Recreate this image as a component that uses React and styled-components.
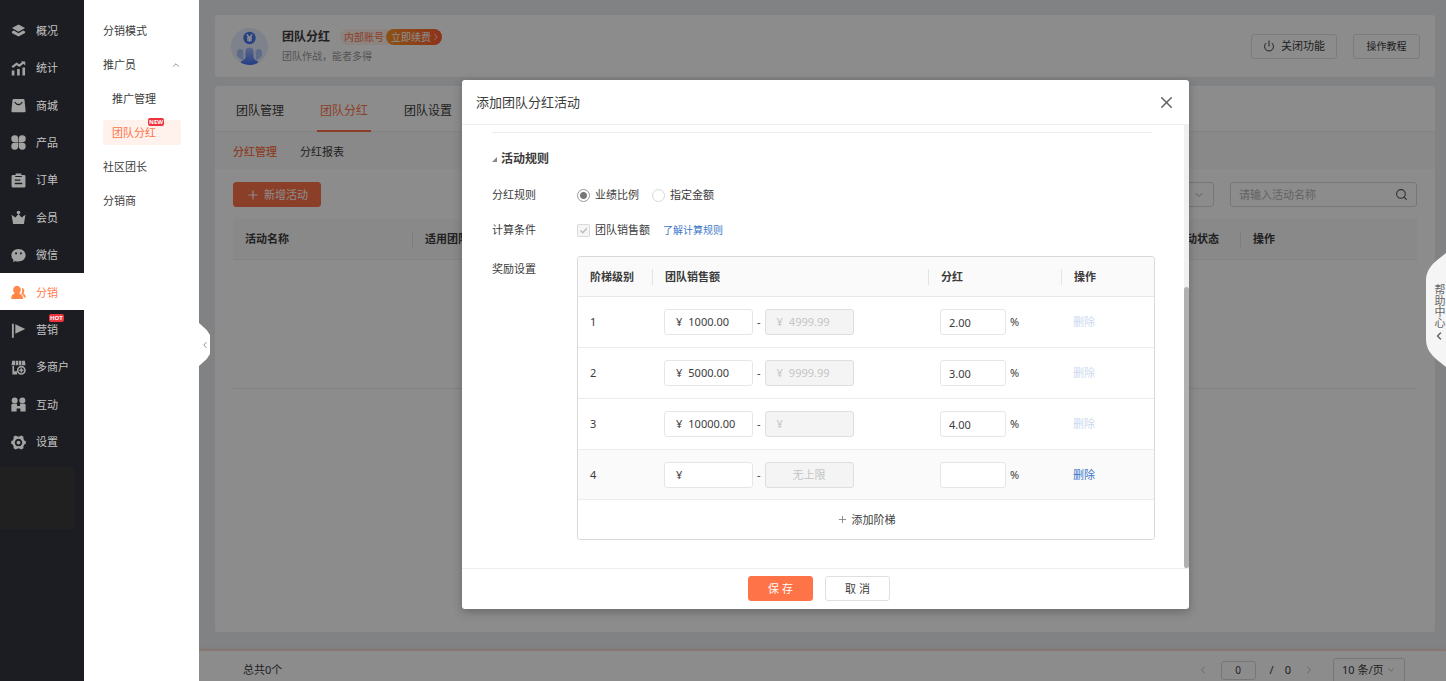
import React, { useState } from 'react';
import styled, { createGlobalStyle, css } from 'styled-components';
import { ChevronDown, ChevronLeft, ChevronRight, ChevronUp, Plus, Power, Search, X } from 'lucide-react';

const GlobalStyle = createGlobalStyle`
    * {
        box-sizing: border-box;
    }
    body {
        margin: 0;
        overflow: hidden;
    }
    body, button, input, select {
        font-family: "Noto Sans", "Noto Sans CJK SC", sans-serif;
        font-size: 11px;
        line-height: 16px;
        color: #3c3c3c;
    }
    button {
        cursor: pointer;
    }
    a {
        text-decoration: none;
    }
`;

const menus = [
    { icon: 'layers', name: '概况' },
    { icon: 'chart', name: '统计' },
    { icon: 'bag', name: '商城' },
    { icon: 'clover', name: '产品' },
    { icon: 'order', name: '订单' },
    { icon: 'crown', name: '会员' },
    { icon: 'wechat', name: '微信' },
    { icon: 'people', name: '分销', active: true },
    { icon: 'flag', name: '营销', tag: 'HOT' },
    { icon: 'shop', name: '多商户' },
    { icon: 'interact', name: '互动' },
    { icon: 'gear', name: '设置' },
];

const subMenus = [
    { name: '分销模式' },
    { name: '推广员', open: true },
    { name: '推广管理', child: true },
    { name: '团队分红', child: true, active: true, tag: 'NEW' },
    { name: '社区团长' },
    { name: '分销商' },
];

const initialLevels = [
    { min: '1000.00', max: '4999.99', rate: '2.00' },
    { min: '5000.00', max: '9999.99', rate: '3.00' },
    { min: '10000.00', max: '', rate: '4.00' },
    { min: '', max: null, rate: '' },
];

const icons = {
    layers: (
        <>
            <path d="M8 1.5 15 5.4 8 9.3 1 5.4Z" />
            <path d="M1 9.1 3 8l5 2.8L13 8l2 1.1v1.5L8 14.5 1 10.6Z" />
        </>
    ),
    chart: (
        <>
            <path d="M.8 10h2.800v5.500H.8zM6.500 8.500h2.800v7H6.500zM12.200 7h2.800v8.500h-2.800z" />
            <path d="M1.300 6.600 6 3l3 2L13.600 1.300" fill="none" stroke="currentColor" strokeWidth="2.400" />
            <path d="M10.500.4h4.700v4.500z" />
        </>
    ),
    bag: (
        <path fillRule="evenodd" d="M2.800 1h10.400q1 0 1.200 1L15.600 13.500q0 1.600-1.400 1.600H1.800Q.4 15.100.4 13.500L1.600 2Q1.800 1 2.800 1ZM4.300 4Q8 9 11.700 4L12.600 4.900Q8 10.600 3.400 4.900Z" />
    ),
    clover: (
        <path d="M7.700 7.700H4.300A3.700 3.700 0 1 1 7.700 4ZM8.300 7.700V4A3.700 3.700 0 1 1 11.700 7.700ZM7.700 8.300V12A3.700 3.700 0 1 1 4.300 8.300ZM8.300 8.300H11.700A3.700 3.700 0 1 1 8.300 12Z" />
    ),
    order: (
        <path fillRule="evenodd" d="M5 .5h6v1.700h3q1.400 0 1.400 1.200v10.600q0 1.400-1.400 1.400H2Q.6 15.400.6 14V3.400Q.6 2.200 2 2.200h3ZM4.500 3.200v1h7v-1ZM4 6.800v1.500h6V6.800ZM4 10.500V12h8v-1.500Z" />
    ),
    crown: (
        <>
            <circle cx="8" cy="2.600" r="1.900" />
            <path d="M.6 5 4.600 8 8 4.200 11.400 8 15.400 5 13.800 15H2.200Z" />
        </>
    ),
    wechat: (
        <path fillRule="evenodd" d="M8 1C12.200 1 15.600 4 15.600 7.700S12.500 13.800 9.500 14.200Q6.500 14.600 4.500 13.800L2.300 15.200 2.600 12.700Q.4 10.800.4 7.700C.4 4 3.800 1 8 1ZM5.400 4.600a1.100 1.100 0 1 0 .01 0ZM10.600 4.600a1.100 1.100 0 1 0 .01 0Z" />
    ),
    people: (
        <>
            <path d="M6.300.8a4.200 4.200 0 0 1 2.700 7.400Q9.100 9.300 10.400 9.800 12.800 10.800 12.800 15H.3Q.2 10.800 2.400 9.900 3.800 9.300 3.700 8.200A4.200 4.200 0 0 1 6.300.8Z" />
            <path d="M11.500 2.800a3.400 3.400 0 0 1 2.700 3.200q.1 1.700-1.100 2.800 2.600 1.300 2.800 4.400h-2q-.6-2.900-2.900-4 1.800-3 .5-6.400Z" />
        </>
    ),
    flag: (
        <path d="M1 .8h2v14.800H1zM4.600 1.300 15.200 6.400 4.600 11.500Z" />
    ),
    shop: (
        <>
            <path d="M1.300.8h3v4.800H.5ZM5 .8h2.700v4.800H5ZM8.400.8h2.700v4.800H8.400ZM11.800.8h3l.7 4.800h-3.700ZM1.500 6.300H3.300V12H1.500ZM1.500 12H6.500v3.500H1.500Z" />
            <circle cx="11" cy="11" r="3.900" fill="none" stroke="currentColor" strokeWidth="1.800" />
            <path d="M10.200 8.800h1.600v1.400h1.400v1.600h-1.400v1.400h-1.600v-1.400H8.800v-1.600h1.400Z" />
        </>
    ),
    interact: (
        <>
            <circle cx="3.900" cy="3.600" r="3.200" />
            <circle cx="12.100" cy="3.600" r="3.200" />
            <path d="M.4 8.500Q.4 7.300 1.800 7.300h4.600v2.200h3.200V7.300h4.600q1.400 0 1.400 1.200v7H10v-3.200H6v3.200H.4Z" />
        </>
    ),
    gear: (
        <>
            <path fillRule="evenodd" d="M5 .6 7 1.700h2L11 .6l2.300 1.300-.1 2.200 1 1.700 1.600.9v2.600l-1.600.9-1 1.700.1 2.200L11 15.400 9 14.300H7L5 15.400l-2.300-1.300.1-2.200-1-1.700L.2 9.300V6.700l1.600-.9 1-1.700-.1-2.200ZM8 4a4 4 0 1 0 .01 0Z" />
            <circle cx="8" cy="8" r="2" />
        </>
    ),
};

const MenuIcon = ({ name }) => (
    <svg width="15" height="15" viewBox="0 0 16 16" fill="currentColor" aria-hidden="true">
        {icons[name]}
    </svg>
);

const Layout = styled.div`
    display: grid;
    grid-template-columns: 84px 115px minmax(0, 1fr);
    height: 100vh;
    overflow: hidden;
`;
const Sidebar = styled.nav`
    background-color: #1c1d22;
    padding-top: 11px;
`;
const MenuList = styled.div`
    display: grid;
    grid-auto-rows: 1fr;
    height: 449px;
`;
const MenuLink = styled.a`
    position: relative;
    display: flex;
    align-items: center;
    gap: 10px;
    padding-top: 2px;
    padding-left: 11px;
    color: ${({ $active }) => ($active ? '#ff7a4d' : '#c4c4c4')};
    background-color: ${({ $active }) => ($active ? '#fff' : 'transparent')};

    svg {
        color: ${({ $active }) => ($active ? '#ff8748' : '#a3a3a3')};
    }
`;
const Tag = styled.span`
    position: absolute;
    top: ${({ $top }) => $top}px;
    left: ${({ $left }) => $left}px;
    padding: 0 1px;
    border-radius: 2px;
    background-color: #f0323c;
    color: #fff;
    font-size: 6px;
    font-weight: 700;
    line-height: 8px;
`;
const SidebarBlock = styled.div`
    width: 74px;
    height: 62px;
    margin-top: 7px;
    background-color: #202020;
`;
const SubSidebar = styled.nav`
    position: relative;
    z-index: 3;
    background-color: #fff;
    padding: 13px 18px 0 19px;
`;
const SubLink = styled.a`
    position: relative;
    display: flex;
    align-items: center;
    justify-content: space-between;
    height: 25px;
    margin: 5px 0 9px;
    padding-left: ${({ $child }) => ($child ? 9 : 0)}px;
    border-radius: 3px;
    color: ${({ $active }) => ($active ? '#ff7349' : '#3c3c3c')};
    background-color: ${({ $active }) => ($active ? '#fff1ec' : 'transparent')};
`;
const CollapseButton = styled.button`
    position: absolute;
    top: 323px;
    left: 100%;
    display: flex;
    align-items: center;
    justify-content: center;
    width: 11px;
    height: 43px;
    padding: 0;
    border: 0;
    background-color: #fff;
    color: #777;
    clip-path: polygon(0 0, 70% 16%, 100% 28%, 100% 72%, 70% 84%, 0 100%);
`;
const Main = styled.main`
    position: relative;
    display: flex;
    flex-direction: column;
    min-width: 0;
    height: 100vh;
    background-color: #e9edf1;
`;
const Content = styled.div`
    flex: 1;
    display: flex;
    flex-direction: column;
    gap: 9px;
    min-height: 0;
    padding: 15px 11px 18px 16px;
`;
const Card = styled.section`
    background-color: #fff;
    border-radius: 3px;
`;
const AppHeader = styled(Card)`
    display: flex;
    align-items: center;
    height: 62px;
    padding: 0 15px 0 16px;
`;
const AppTitle = styled.div`
    flex: 1;
    display: flex;
    flex-direction: column;
    gap: 3px;
    padding-top: 1px;
    padding-left: 14px;
`;
const TitleLine = styled.div`
    display: flex;
    align-items: center;
    gap: 10px;

    h1 {
        margin: 0;
        font-size: 12px;
        font-weight: 700;
    }
`;
const AccountBadge = styled.div`
    display: flex;
    align-items: center;
    height: 16px;
    border-radius: 8px;
    background-color: #fff1ec;
    color: #ff7349;
    font-size: 10px;
    padding-left: 4px;
    gap: 2px;
`;
const RenewButton = styled.button`
    display: flex;
    align-items: center;
    height: 16px;
    padding: 0 1px 0 5px;
    border: 0;
    border-radius: 8px;
    background: linear-gradient(90deg, #ff9426, #ff5c33);
    color: #fff;
    font-size: 10px;
`;
const SubTitle = styled.p`
    margin: 0;
    font-size: 10px;
    color: #999;
`;
const HeaderButtons = styled.div`
    display: flex;
    align-items: center;
    gap: 16px;
`;
const Button = styled.button`
    display: flex;
    align-items: center;
    justify-content: center;
    gap: 6px;
    height: 25px;
    padding: 0 11px;
    border: 1px solid #e0e0e0;
    border-radius: 3px;
    background-color: #fff;

    ${({ $primary }) => $primary && css`
        border-color: #ff7349;
        background-color: #ff7349;
        color: #fff;
    `}
`;
const FooterButton = styled(Button)`
    width: 65px;
    padding: 0;
`;
const GuideButton = styled(Button)`
    width: 67px;
    font-size: 10px;
`;
const MainCard = styled(Card)`
    flex: 1;
    min-height: 0;
`;
const Tabs = styled.div`
    display: flex;
    gap: 30px;
    height: 46px;
    padding-left: 18px;
    border-bottom: 1px solid #eee;
`;
const Tab = styled.button`
    height: 46px;
    padding: 5px 3px 0;
    border: 0;
    border-bottom: 2px solid ${({ $active }) => ($active ? '#ff7349' : 'transparent')};
    background: none;
    font-size: 12px;
    color: ${({ $active }) => ($active ? '#ff7349' : '#3c3c3c')};
`;
const SubTabs = styled.div`
    display: flex;
    align-items: center;
    gap: 23px;
    height: 37px;
    padding-left: 18px;
    background-color: #f9f9f9;
`;
const SubTab = styled.button`
    padding: 2px 0 0;
    border: 0;
    background: none;
    color: ${({ $active }) => ($active ? '#ff7349' : '#3c3c3c')};
    font-weight: ${({ $active }) => ($active ? 500 : 400)};
`;
const Toolbar = styled.div`
    display: flex;
    align-items: center;
    gap: 16px;
    padding: 13px 18px 12px;
`;
const AddButton = styled(Button)`
    width: 88px;
    margin-right: auto;
    padding: 0;
    gap: 4px;
`;
const SelectBox = styled.div`
    display: flex;
    align-items: center;
    width: ${({ $width }) => $width}px;
    height: 25px;
    padding: 0 8px;
    border: 1px solid #d9d9d9;
    border-radius: 3px;
    background-color: #fff;

    select {
        flex: 1;
        min-width: 0;
        padding: 0;
        border: 0;
        background: none;
        appearance: none;
        outline: none;
    }
    svg {
        flex: none;
        color: #aaa;
    }
`;
const SearchBox = styled.div`
    display: flex;
    align-items: center;
    width: 187px;
    height: 25px;
    padding: 0 8px;
    border: 1px solid #d9d9d9;
    border-radius: 3px;

    input {
        flex: 1;
        min-width: 0;
        padding: 0;
        border: 0;
        background: none;
        outline: none;
    }
    input::placeholder {
        color: #b5b5b5;
    }
`;
const ListWrapper = styled.div`
    padding: 0 18px;
`;
const ListTable = styled.table`
    width: 100%;
    border-collapse: separate;
    border-spacing: 0;
    table-layout: fixed;

    th {
        height: 41px;
        padding: 0;
        background-color: #f9f9f9;
        border-bottom: 1px solid #eee;
        text-align: left;
        font-weight: 700;
    }
    td {
        height: 129px;
        border-bottom: 1px solid #eaeaea;
    }
`;
const HeadCell = styled.div`
    padding-left: ${({ $first }) => ($first ? 11 : 12)}px;
    border-left: 1px solid ${({ $first }) => ($first ? 'transparent' : '#e4e4e4')};
    white-space: nowrap;
`;
const PageFooter = styled.footer`
    height: 31px;
    overflow: hidden;
    border-top: 1px solid #ffd5c6;
    background-color: #fff;
    box-shadow: 0 -1px 3px rgba(255, 115, 73, 0.2);
`;
const Pager = styled.div`
    display: flex;
    align-items: center;
    height: 38px;
    padding: 0 41px 0 44px;

    > span:first-child {
        margin-right: auto;
    }
`;
const PageArrow = styled.button`
    display: flex;
    padding: 0;
    border: 0;
    background: none;
    color: #bbb;
`;
const PageInput = styled.input`
    width: 35px;
    height: 19px;
    margin: 0 14px 0 12px;
    padding: 0;
    border: 1px solid #d9d9d9;
    border-radius: 3px;
    background: none;
    text-align: center;
    font-size: 10px;
`;
const PageTotal = styled.span`
    display: flex;
    gap: 11px;
    margin-right: 12px;
`;
const PageSize = styled(SelectBox)`
    margin-left: 18px;
`;
const Mask = styled.div`
    position: absolute;
    inset: 0;
    z-index: 1;
    display: flex;
    align-items: center;
    justify-content: center;
    padding: 8px 0 0 6px;
    background-color: rgba(0, 0, 0, 0.45);
`;
const Modal = styled.div`
    display: flex;
    flex-direction: column;
    width: 727px;
    max-width: 100%;
    background-color: #fff;
    border-radius: 3px;
    box-shadow: 0 3px 10px rgba(0, 0, 0, 0.25);
`;
const ModalHeader = styled.header`
    display: flex;
    align-items: center;
    justify-content: space-between;
    height: 45px;
    padding: 0 13px 0 14px;
    border-bottom: 1px solid #eee;

    h2 {
        margin: 0;
        font-size: 13px;
        font-weight: 400;
    }
`;
const CloseButton = styled.button`
    display: flex;
    padding: 0;
    border: 0;
    background: none;
    color: #666;
`;
const ModalScroll = styled.div`
    display: flex;
`;
const ModalBody = styled.div`
    flex: 1;
    min-width: 0;
    padding: 7px 29px 28px 30px;
`;
const ScrollTrack = styled.div`
    display: flex;
    align-items: flex-end;
    width: 5px;
    background-color: #f0f0f0;
`;
const ScrollThumb = styled.div`
    width: 5px;
    height: 281px;
    border-radius: 3px;
    background-color: #b0b0b0;
`;
const Divider = styled.hr`
    height: 1px;
    margin: 0 3px 18px 0;
    border: 0;
    background-color: #eee;
`;
const SectionTitle = styled.h3`
    display: flex;
    align-items: center;
    gap: 4px;
    margin: 0 0 20px;
    font-size: 12px;
    font-weight: 700;
`;
const FormRow = styled.div`
    display: grid;
    grid-template-columns: 85px minmax(0, 1fr);
    align-items: start;
    margin-bottom: ${({ $gap }) => $gap}px;
`;
const Options = styled.div`
    display: flex;
    align-items: center;
    gap: 13px;

    label {
        display: flex;
        align-items: center;
        gap: 5px;
    }
`;
const Radio = styled.input`
    width: 13px;
    height: 13px;
    margin: 0;
    border: 1px solid #d9d9d9;
    border-radius: 50%;
    appearance: none;

    &:checked {
        border-color: #999;
        background: radial-gradient(circle, #777 3px, #fff 4px);
    }
`;
const CheckWrap = styled.span`
    position: relative;
    display: flex;

    input {
        width: 13px;
        height: 13px;
        margin: 0;
        border: 1px solid #d9d9d9;
        border-radius: 2px;
        background-color: #f5f5f5;
        appearance: none;
    }
    svg {
        position: absolute;
        inset: 0;
    }
`;
const RuleLink = styled.a`
    color: #3a76c8;
    font-size: 10px;
`;
const LevelBox = styled.div`
    margin-top: -5px;
    border: 1px solid #d9d9d9;
    border-radius: 3px;
    overflow: hidden;
`;
const LevelTable = styled.table`
    width: 100%;
    border-collapse: separate;
    border-spacing: 0;
    table-layout: fixed;

    th {
        height: 40px;
        padding: 0;
        background-color: #fafafa;
        border-bottom: 1px solid #e8e8e8;
        text-align: left;
        font-weight: 700;
    }
    td {
        height: 51px;
        padding: 0 0 0 12px;
        border-bottom: 1px solid #ececec;
    }
    tbody tr:last-child td {
        height: 50px;
        background-color: #fafafa;
    }
`;
const CellFlow = styled.div`
    display: flex;
    align-items: center;
    gap: 4px;
`;
const MoneyBox = styled.label`
    display: flex;
    align-items: center;
    gap: 6px;
    width: 89px;
    height: 26px;
    padding-left: 11px;
    border: 1px solid ${({ $disabled }) => ($disabled ? '#dedede' : '#e6e6e6')};
    border-radius: 3px;
    background-color: ${({ $disabled }) => ($disabled ? '#f4f4f4' : '#fff')};
    color: ${({ $disabled }) => ($disabled ? '#c4c4c4' : '#3c3c3c')};

    input {
        flex: 1;
        min-width: 0;
        padding: 0;
        border: 0;
        background: none;
        color: inherit;
        outline: none;
    }
`;
const NoLimit = styled.input`
    width: 89px;
    height: 26px;
    padding: 0;
    border: 1px solid #dedede;
    border-radius: 3px;
    background-color: #f4f4f4;
    text-align: center;

    &::placeholder {
        color: #c4c4c4;
    }
`;
const RateInput = styled.input`
    width: 66px;
    height: 26px;
    padding: 0 8px;
    border: 1px solid #e6e6e6;
    border-radius: 3px;
    background-color: #fff;
`;
const DeleteButton = styled.button`
    padding: 0;
    border: 0;
    background: none;
    color: #3a76c8;

    &:disabled {
        color: #ccdaf0;
    }
`;
const AddLevel = styled.button`
    display: flex;
    align-items: center;
    justify-content: center;
    gap: 4px;
    width: 100%;
    height: 39px;
    border: 0;
    background-color: #fff;
`;
const ModalFooter = styled.footer`
    display: flex;
    justify-content: center;
    gap: 12px;
    padding: 7px 13px 8px 0;
    border-top: 1px solid #eee;
`;
const HelpTab = styled.aside`
    position: absolute;
    top: 253px;
    right: 0;
    z-index: 2;
    width: 20px;
    height: 114px;

    > svg {
        position: absolute;
        inset: 0;
    }
`;
const HelpText = styled.button`
    position: relative;
    display: flex;
    flex-direction: column;
    align-items: center;
    gap: 2px;
    width: 12px;
    margin-left: 7px;
    padding: 31px 0 0;
    border: 0;
    background: none;
    color: #666;

    span {
        writing-mode: vertical-rl;
        line-height: 12px;
    }
`;

const TeamLogo = () => (
    <svg width="37" height="37" viewBox="0 0 37 37" aria-hidden="true">
        <defs>
            <clipPath id="logoClip"><circle cx="18.5" cy="18.5" r="18.5" /></clipPath>
            <linearGradient id="logoBlue" x1="0" y1="0" x2="0" y2="1">
                <stop offset="0" stopColor="#a9c0ff" />
                <stop offset="1" stopColor="#3a6cf0" />
            </linearGradient>
        </defs>
        <circle cx="18.5" cy="18.5" r="18.5" fill="#e3edfd" />
        <g clipPath="url(#logoClip)">
            <path d="M6 25q0-4 3.200-4t3.200 4v7q-4-1-6.400-4Z" fill="#a9c4f8" />
            <path d="M31 25q0-4-3.200-4t-3.200 4v7q4-1 6.400-4Z" fill="#a9c4f8" />
            <path d="M14.500 23.500q0-4 4-4t4 4v5q0 3 4 4.500l2 5h-20l2-5q4-1.500 4-4.500Z" fill="url(#logoBlue)" />
        </g>
        <circle cx="18.500" cy="10" r="6.200" fill="#4877ee" />
        <path d="M15.800 6.500l2.700 3.200 2.700-3.200M18.500 9.700v4.300M16 10h5M16 12h5" fill="none" stroke="#fff" strokeWidth="1.300" />
    </svg>
);

const TeamBonusModal = () => {
    const [levels, setLevels] = useState(initialLevels);
    const [rule, setRule] = useState('rate');

    const changeLevel = (index, key, value) => {
        setLevels(levels.map((level, i) => (i === index ? { ...level, [key]: value } : level)));
    };
    const addLevel = () => {
        setLevels([
            ...levels.map((level) => ({ ...level, max: level.max ?? '' })),
            { min: '', max: null, rate: '' },
        ]);
    };
    const removeLevel = () => {
        setLevels(levels.slice(0, -1));
    };

    return (
        <Modal role="dialog" aria-labelledby="modalTitle">
            <ModalHeader>
                <h2 id="modalTitle">添加团队分红活动</h2>
                <CloseButton aria-label="关闭"><X size={19} strokeWidth={2} /></CloseButton>
            </ModalHeader>
            <ModalScroll>
                <ModalBody>
                    <Divider />
                    <SectionTitle>
                        <svg width="5" height="5" viewBox="0 0 5 5" aria-hidden="true">
                            <path d="M5 0v5H0Z" fill="#888" />
                        </svg>
                        活动规则
                    </SectionTitle>
                    <FormRow $gap={19}>
                        <span>分红规则</span>
                        <Options>
                            <label>
                                <Radio type="radio" name="rule" checked={rule === 'rate'} onChange={() => setRule('rate')} />
                                业绩比例
                            </label>
                            <label>
                                <Radio type="radio" name="rule" checked={rule === 'amount'} onChange={() => setRule('amount')} />
                                指定金额
                            </label>
                        </Options>
                    </FormRow>
                    <FormRow $gap={23}>
                        <span>计算条件</span>
                        <Options>
                            <label>
                                <CheckWrap>
                                    <input type="checkbox" checked disabled readOnly />
                                    <svg width="13" height="13" viewBox="0 0 13 13" aria-hidden="true">
                                        <path d="M3.500 6.500 5.800 8.800 9.800 4.300" fill="none" stroke="#bbb" strokeWidth="1.300" />
                                    </svg>
                                </CheckWrap>
                                团队销售额
                            </label>
                            <RuleLink href="#">了解计算规则</RuleLink>
                        </Options>
                    </FormRow>
                    <FormRow $gap={0}>
                        <span>奖励设置</span>
                        <LevelBox>
                            <LevelTable>
                                <colgroup>
                                    <col width="74" />
                                    <col width="276" />
                                    <col width="133" />
                                    <col />
                                </colgroup>
                                <thead>
                                    <tr>
                                        <th><HeadCell $first>阶梯级别</HeadCell></th>
                                        <th><HeadCell>团队销售额</HeadCell></th>
                                        <th><HeadCell>分红</HeadCell></th>
                                        <th><HeadCell>操作</HeadCell></th>
                                    </tr>
                                </thead>
                                <tbody>
                                    {levels.map((level, index) => (
                                        <tr key={index}>
                                            <td>{index + 1}</td>
                                            <td>
                                                <CellFlow>
                                                    <MoneyBox>
                                                        ¥
                                                        <input value={level.min} onChange={(e) => changeLevel(index, 'min', e.target.value)} />
                                                    </MoneyBox>
                                                    -
                                                    {level.max === null ? (
                                                        <NoLimit disabled placeholder="无上限" aria-label="上限" />
                                                    ) : (
                                                        <MoneyBox $disabled>
                                                            ¥
                                                            <input value={level.max} disabled readOnly />
                                                        </MoneyBox>
                                                    )}
                                                </CellFlow>
                                            </td>
                                            <td>
                                                <CellFlow>
                                                    <RateInput aria-label="分红" value={level.rate} onChange={(e) => changeLevel(index, 'rate', e.target.value)} />
                                                    %
                                                </CellFlow>
                                            </td>
                                            <td>
                                                <DeleteButton disabled={index !== levels.length - 1} onClick={removeLevel}>删除</DeleteButton>
                                            </td>
                                        </tr>
                                    ))}
                                </tbody>
                            </LevelTable>
                            <AddLevel onClick={addLevel}>
                                <Plus size={11} strokeWidth={2} color="#888" />
                                添加阶梯
                            </AddLevel>
                        </LevelBox>
                    </FormRow>
                </ModalBody>
                <ScrollTrack>
                    <ScrollThumb />
                </ScrollTrack>
            </ModalScroll>
            <ModalFooter>
                <FooterButton $primary>保 存</FooterButton>
                <FooterButton>取 消</FooterButton>
            </ModalFooter>
        </Modal>
    );
};

const App = () => {
    return (
        <>
            <GlobalStyle />
            <Layout>
                <Sidebar>
                    <MenuList>
                        {menus.map((menu) => (
                            <MenuLink key={menu.name} href="#" $active={menu.active}>
                                <MenuIcon name={menu.icon} />
                                {menu.name}
                                {menu.tag && <Tag $top={4} $left={49}>{menu.tag}</Tag>}
                            </MenuLink>
                        ))}
                    </MenuList>
                    <SidebarBlock />
                </Sidebar>
                <SubSidebar>
                    {subMenus.map((menu) => (
                        <SubLink key={menu.name} href="#" $child={menu.child} $active={menu.active}>
                            {menu.name}
                            {menu.open && <ChevronUp size={10} color="#777" />}
                            {menu.tag && <Tag $top={-2} $left={45}>{menu.tag}</Tag>}
                        </SubLink>
                    ))}
                    <CollapseButton aria-label="收起"><ChevronLeft size={10} /></CollapseButton>
                </SubSidebar>
                <Main>
                    <Content>
                        <AppHeader>
                            <TeamLogo />
                            <AppTitle>
                                <TitleLine>
                                    <h1>团队分红</h1>
                                    <AccountBadge>
                                        内部账号
                                        <RenewButton>立即续费<ChevronRight size={10} /></RenewButton>
                                    </AccountBadge>
                                </TitleLine>
                                <SubTitle>团队作战，能者多得</SubTitle>
                            </AppTitle>
                            <HeaderButtons>
                                <Button><Power size={12} strokeWidth={2} />关闭功能</Button>
                                <GuideButton>操作教程</GuideButton>
                            </HeaderButtons>
                        </AppHeader>
                        <MainCard>
                            <Tabs>
                                <Tab>团队管理</Tab>
                                <Tab $active>团队分红</Tab>
                                <Tab>团队设置</Tab>
                            </Tabs>
                            <SubTabs>
                                <SubTab $active>分红管理</SubTab>
                                <SubTab>分红报表</SubTab>
                            </SubTabs>
                            <Toolbar>
                                <AddButton $primary><Plus size={14} strokeWidth={2} />新增活动</AddButton>
                                <SelectBox $width={120}>
                                    <select aria-label="活动状态" />
                                    <ChevronDown size={12} />
                                </SelectBox>
                                <SearchBox>
                                    <input aria-label="活动名称" placeholder="请输入活动名称" />
                                    <Search size={13} color="#555" />
                                </SearchBox>
                            </Toolbar>
                            <ListWrapper>
                                <ListTable>
                                    <colgroup>
                                        <col width="179" />
                                        <col />
                                        <col width="78" />
                                        <col width="177" />
                                    </colgroup>
                                    <thead>
                                        <tr>
                                            <th><HeadCell $first>活动名称</HeadCell></th>
                                            <th><HeadCell>适用团队</HeadCell></th>
                                            <th><HeadCell>活动状态</HeadCell></th>
                                            <th><HeadCell>操作</HeadCell></th>
                                        </tr>
                                    </thead>
                                    <tbody>
                                        <tr><td colSpan={4} /></tr>
                                    </tbody>
                                </ListTable>
                            </ListWrapper>
                        </MainCard>
                    </Content>
                    <PageFooter>
                        <Pager>
                            <span>总共0个</span>
                            <PageArrow aria-label="上一页"><ChevronLeft size={12} /></PageArrow>
                            <PageInput aria-label="页码" defaultValue="0" />
                            <PageTotal><span>/</span><span>0</span></PageTotal>
                            <PageArrow aria-label="下一页"><ChevronRight size={12} /></PageArrow>
                            <PageSize $width={72}>
                                <select aria-label="每页条数">
                                    <option>10 条/页</option>
                                </select>
                                <ChevronDown size={10} />
                            </PageSize>
                        </Pager>
                    </PageFooter>
                    <Mask>
                        <TeamBonusModal />
                    </Mask>
                    <HelpTab>
                        <svg width="20" height="114" viewBox="0 0 20 114" aria-hidden="true">
                            <path d="M20 0C12 7 0 13 0 28V86C0 101 12 107 20 114Z" fill="#f5f5f5" />
                        </svg>
                        <HelpText>
                            <span>帮助中心</span>
                            <ChevronLeft size={12} strokeWidth={3} />
                        </HelpText>
                    </HelpTab>
                </Main>
            </Layout>
        </>
    );
};

export default App;
